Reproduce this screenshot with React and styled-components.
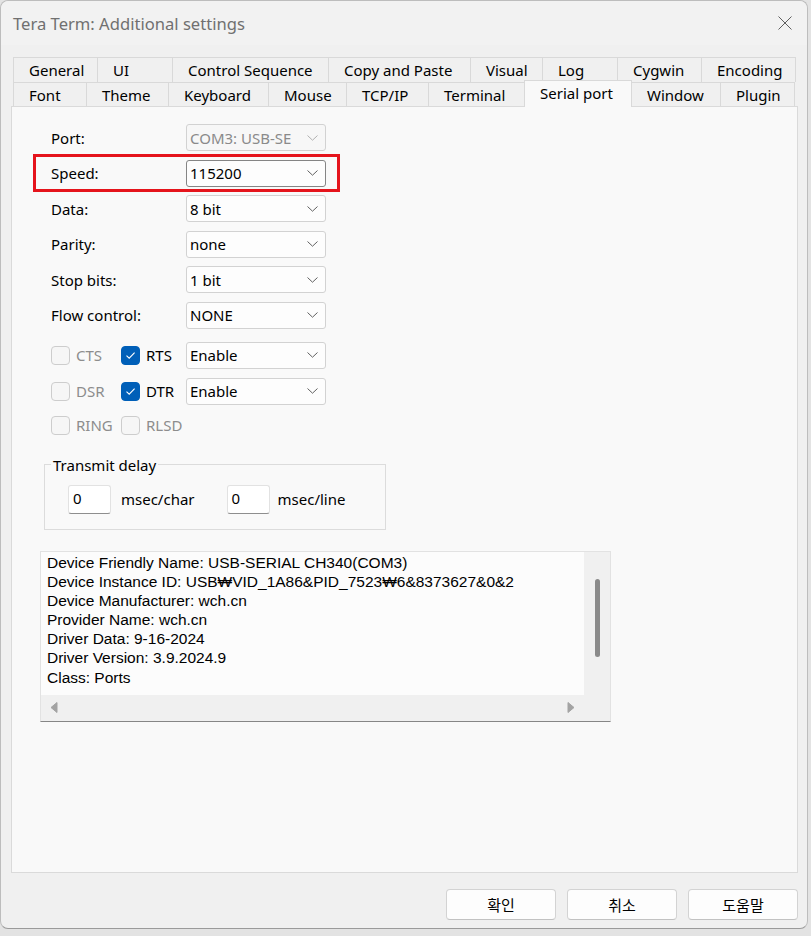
import React from "react";
import styled, { createGlobalStyle } from "styled-components";

const GlobalStyle = createGlobalStyle`
  html, body {
    margin: 0;
    padding: 0;
    background: #e3e3e3;
  }
  body {
    font-family: "Noto Sans", "Noto Sans CJK KR", sans-serif;
    font-size: 15px;
    color: #000;
  }
`;

const Page = styled.div`
  width: 811px;
  height: 936px;
  overflow: hidden;
  display: flex;
  flex-direction: column;
`;

const Window = styled.div`
  width: 808px;
  height: 929px;
  box-sizing: border-box;
  border: 1px solid #bdbdbd;
  border-bottom-color: #9a9a9a;
  border-radius: 8px;
  background: #f0f0f0;
  display: flex;
  flex-direction: column;
  flex-shrink: 0;
`;

const TitleBar = styled.div`
  height: 44px;
  display: flex;
  align-items: center;
  justify-content: space-between;
  padding: 0 15px 0 12px;
  background: #f2f2f2;
  border-radius: 8px 8px 0 0;
`;

const Title = styled.span`
  font-size: 16.6px;
  color: #707070;
`;

const Body = styled.div`
  flex: 1;
  display: flex;
  flex-direction: column;
  padding: 12px 9px 8px 10px;
`;

const TabStrip = styled.div`
  display: flex;
  flex-direction: column;
  margin-left: 2px;
  position: relative;
  z-index: 1;
`;

const TabRow = styled.div`
  display: flex;
  height: ${(p) => p.h}px;
  align-items: flex-end;
`;

const Tab = styled.div`
  box-sizing: border-box;
  width: ${(p) => p.w}px;
  height: ${(p) => (p.active ? p.h + 3 : p.h)}px;
  display: flex;
  align-items: center;
  padding-left: 15px;
  border-top: 1px solid #d9d9d9;
  border-left: 1px solid #d9d9d9;
  border-right: ${(p) => (p.last || p.active ? "1px solid #d9d9d9" : "none")};
  margin-right: ${(p) => (p.active ? "-1px" : "0")};
  background: ${(p) => (p.active ? "#f9f9f9" : "#f0f0f0")};
  margin-bottom: ${(p) => (p.active ? "-1px" : "0")};
  padding-bottom: ${(p) => (p.active ? "3px" : "0")};
  position: relative;
  z-index: ${(p) => (p.active ? 2 : 1)};
  white-space: nowrap;
`;

const Panel = styled.div`
  height: 767px;
  box-sizing: border-box;
  background: #f9f9f9;
  border: 1px solid #dadada;
  padding: 17px 0 0 28px;
  display: flex;
  flex-direction: column;
`;

const Form = styled.div`
  margin-left: 11px;
  display: flex;
  flex-direction: column;
  gap: 8.6px;
`;

const FieldRow = styled.div`
  display: grid;
  grid-template-columns: 135px 140px;
  height: 27px;
  align-items: center;
  position: relative;
  width: 275px;
`;

const Highlight = styled.div`
  position: absolute;
  left: -18px;
  top: -6px;
  right: -14px;
  bottom: -5px;
  border: 3px solid #e5141c;
  pointer-events: none;
`;

const Select = styled.div`
  box-sizing: border-box;
  height: 27px;
  display: flex;
  align-items: center;
  justify-content: space-between;
  padding: 0 7px 0 3px;
  background: ${(p) => (p.disabled ? "#f7f7f7" : "#fdfdfd")};
  border: 1px solid ${(p) => (p.focused ? "#858585" : "#d2d2d2")};
  border-radius: 3px;
  color: ${(p) => (p.disabled ? "#8a8a8a" : "#000")};
  white-space: nowrap;
  overflow: hidden;
`;

const ChevronIcon = ({ color = "#606060" }) => (
  <svg width="11" height="6" viewBox="0 0 11 6">
    <path d="M0.5 0.5 L5.5 5.2 L10.5 0.5" fill="none" stroke={color} strokeWidth="1" />
  </svg>
);

const CheckRows = styled.div`
  margin-left: 11px;
  margin-top: 13px;
  display: flex;
  flex-direction: column;
`;

const CheckRow = styled.div`
  display: flex;
  align-items: center;
  height: ${(p) => p.h || 27}px;
  margin-top: ${(p) => p.mt || 0}px;
`;

const CheckItem = styled.div`
  width: ${(p) => p.w}px;
  display: flex;
  align-items: center;
  gap: 6px;
  color: ${(p) => (p.disabled ? "#8d8d8d" : "#000")};
`;

const Box = styled.span`
  box-sizing: border-box;
  width: 19px;
  height: 19px;
  border-radius: 4px;
  border: 1px solid ${(p) => (p.checked ? "#005fb8" : "#cdcdcd")};
  background: ${(p) => (p.checked ? "#005fb8" : "#f6f6f6")};
  display: flex;
  align-items: center;
  justify-content: center;
  flex-shrink: 0;
`;

const CheckIcon = () => (
  <svg width="11" height="9" viewBox="0 0 11 9">
    <path d="M1.5 4.6 L4.2 7.2 L9.6 1.6" fill="none" stroke="#fff" strokeWidth="1.1" />
  </svg>
);

const SmallSelect = styled(Select)`
  width: 140px;
`;

const Group = styled.fieldset`
  margin: 20px 0 0 4px;
  width: 342px;
  box-sizing: border-box;
  border: 1px solid #dcdcdc;
  padding: 10px 0 15px 0;
  display: flex;
  align-items: center;
`;

const Legend = styled.legend`
  padding: 0 2px;
  margin-left: 6px;
  line-height: 20px;
`;

const NumInput = styled.div`
  box-sizing: border-box;
  width: 43px;
  height: 29px;
  margin-left: ${(p) => p.ml || 0}px;
  background: #fff;
  border: 1px solid #e2e2e2;
  border-bottom-color: #8e8e8e;
  border-radius: 3px;
  padding: 2px 0 0 4px;
`;

const Unit = styled.span`
  margin: 0 ${(p) => p.mr || 0}px 0 ${(p) => p.ml}px;
`;

const InfoBox = styled.div`
  margin-top: 21px;
  width: 571px;
  height: 171px;
  box-sizing: border-box;
  border: 1px solid #e2e2e2;
  border-bottom-color: #868686;
  display: grid;
  grid-template-columns: 1fr 26px;
  grid-template-rows: 1fr 26px;
  background: #f0f0f0;
`;

const InfoText = styled.div`
  background: #fcfcfc;
  padding: 1px 0 0 6px;
  font-family: "Liberation Sans", "Noto Sans CJK KR", sans-serif;
  font-size: 15.5px;
  line-height: 19.1px;
  white-space: nowrap;
  overflow: hidden;
`;

const VScroll = styled.div`
  display: flex;
  justify-content: center;
  padding-top: 27px;
`;

const Thumb = styled.div`
  width: 5px;
  height: 78px;
  border-radius: 3px;
  background: #8a8a8a;
`;

const HScroll = styled.div`
  display: flex;
  align-items: center;
  justify-content: space-between;
  padding: 0 9px 0 9px;
`;

const ArrowIcon = ({ dir }) => (
  <svg width="8" height="11" viewBox="0 0 8 11">
    <path
      d={dir === "left" ? "M7 0.5 L7 10.5 L1 5.5 Z" : "M1 0.5 L1 10.5 L7 5.5 Z"}
      fill="#a3a3a3"
      stroke="#a3a3a3"
      strokeLinejoin="round"
    />
  </svg>
);

const ButtonBar = styled.div`
  margin-top: 16px;
  display: flex;
  justify-content: flex-end;
  gap: 11px;
`;

const Button = styled.div`
  box-sizing: border-box;
  width: 110px;
  height: 31px;
  display: flex;
  align-items: center;
  justify-content: center;
  background: #fdfdfd;
  border: 1px solid #d3d3d3;
  border-bottom-color: #c2c2c2;
  border-radius: 4px;
  font-family: "Noto Sans CJK KR", sans-serif;
  font-size: 15px;
`;

const Desktop = styled.div`
  height: 7px;
  padding-left: 316px;
`;

const CloseIcon = () => (
  <svg width="14" height="14" viewBox="0 0 14 14">
    <path d="M0.5 0.5 L13.5 13.5 M13.5 0.5 L0.5 13.5" stroke="#5f5f5f" strokeWidth="1" />
  </svg>
);

const row1 = [
  ["General", 84],
  ["UI", 75],
  ["Control Sequence", 156],
  ["Copy and Paste", 142],
  ["Visual", 72],
  ["Log", 75],
  ["Cygwin", 84],
  ["Encoding", 95],
];

const row2 = [
  ["Font", 73],
  ["Theme", 82],
  ["Keyboard", 100],
  ["Mouse", 78],
  ["TCP/IP", 82],
  ["Terminal", 96],
  ["Serial port", 108],
  ["Window", 89],
  ["Plugin", 75],
];

const fields = [
  ["Port:", "COM3: USB-SE", { disabled: true }],
  ["Speed:", "115200", { focused: true, highlight: true }],
  ["Data:", "8 bit", {}],
  ["Parity:", "none", {}],
  ["Stop bits:", "1 bit", {}],
  ["Flow control:", "NONE", {}],
];

const info = [
  "Device Friendly Name: USB-SERIAL CH340(COM3)",
  "Device Instance ID: USB\u20A9VID_1A86&PID_7523\u20A96&8373627&0&2",
  "Device Manufacturer: wch.cn",
  "Provider Name: wch.cn",
  "Driver Data: 9-16-2024",
  "Driver Version: 3.9.2024.9",
  "Class: Ports",
];

const Check = ({ label, checked, disabled, w }) => (
  <CheckItem w={w} disabled={disabled}>
    <Box checked={checked}>{checked && <CheckIcon />}</Box>
    {label}
  </CheckItem>
);

export default function App() {
  return (
    <Page>
      <GlobalStyle />
      <Window>
        <TitleBar>
          <Title>Tera Term: Additional settings</Title>
          <CloseIcon />
        </TitleBar>
        <Body>
          <TabStrip>
            <TabRow h={25}>
              {row1.map(([t, w], i) => (
                <Tab key={t} w={w} h={25} last={i === row1.length - 1}>
                  {t}
                </Tab>
              ))}
            </TabRow>
            <TabRow h={24}>
              {row2.map(([t, w], i) => (
                <Tab
                  key={t}
                  w={w}
                  h={24}
                  active={t === "Serial port"}
                  last={i === row2.length - 1}
                >
                  {t}
                </Tab>
              ))}
            </TabRow>
          </TabStrip>
          <Panel>
            <Form>
              {fields.map(([label, value, o]) => (
                <FieldRow key={label}>
                  {o.highlight && <Highlight />}
                  <span>{label}</span>
                  <Select disabled={o.disabled} focused={o.focused}>
                    {value}
                    <ChevronIcon color={o.disabled ? "#b0b0b0" : "#606060"} />
                  </Select>
                </FieldRow>
              ))}
            </Form>
            <CheckRows>
              <CheckRow>
                <Check label="CTS" disabled w={70} />
                <Check label="RTS" checked w={65} />
                <SmallSelect>
                  Enable
                  <ChevronIcon />
                </SmallSelect>
              </CheckRow>
              <CheckRow mt={9}>
                <Check label="DSR" disabled w={70} />
                <Check label="DTR" checked w={65} />
                <SmallSelect>
                  Enable
                  <ChevronIcon />
                </SmallSelect>
              </CheckRow>
              <CheckRow h={19} mt={11}>
                <Check label="RING" disabled w={70} />
                <Check label="RLSD" disabled w={65} />
              </CheckRow>
            </CheckRows>
            <Group>
              <Legend>Transmit delay</Legend>
              <NumInput ml={23}>0</NumInput>
              <Unit ml={10} mr={32}>msec/char</Unit>
              <NumInput>0</NumInput>
              <Unit ml={8}>msec/line</Unit>
            </Group>
            <InfoBox>
              <InfoText>
                {info.map((l) => (
                  <div key={l}>{l}</div>
                ))}
              </InfoText>
              <VScroll>
                <Thumb />
              </VScroll>
              <HScroll>
                <ArrowIcon dir="left" />
                <ArrowIcon dir="right" />
              </HScroll>
              <div />
            </InfoBox>
          </Panel>
          <ButtonBar>
            <Button>확인</Button>
            <Button>취소</Button>
            <Button>도움말</Button>
          </ButtonBar>
        </Body>
      </Window>
      <Desktop>
        <svg width="14" height="7" viewBox="0 0 14 7">
          <path d="M1 8 L11 -1" stroke="#3c3c3c" strokeWidth="2.2" />
        </svg>
      </Desktop>
    </Page>
  );
}
